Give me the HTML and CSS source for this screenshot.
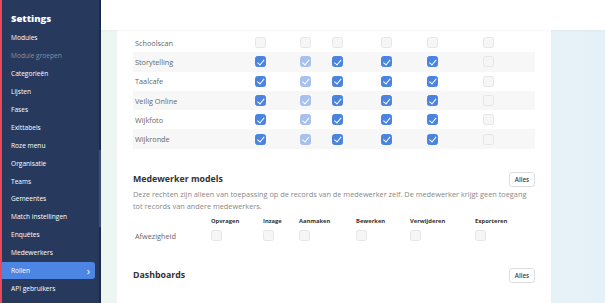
FILE: index.html
```html
<!DOCTYPE html>
<html lang="nl">

<head>
    <meta charset="UTF-8">
    <meta name="viewport" content="width=device-width, initial-scale=1.0">
    <title>Rollen</title>
    <link rel="stylesheet" href="styles.css">
</head>

<body>

    <!-- Sidebar -->
    <div class="sidebar">
        <h2>Settings</h2>
        <a href="#">Modules</a>
        <a href="#" class="muted">Module groepen</a>
        <a href="#">Categorieën</a>
        <a href="#">Lijsten</a>
        <a href="#">Fases</a>
        <a href="#">Exittabels</a>
        <a href="#">Roze menu</a>
        <a href="#">Organisatie</a>
        <a href="#">Teams</a>
        <a href="#">Gemeentes</a>
        <a href="#">Match instellingen</a>
        <a href="#">Enquêtes</a>
        <a href="#">Medewerkers</a>
        <a href="#" class="active">Rollen <span class="chevron">&#8250;</span></a>
        <a href="#">API gebruikers</a>
        <div class="scroll-thumb"></div>
    </div>

    <!-- Main Content -->
    <div class="main">
        <div class="topbar"></div>

        <div class="content">
            <div class="card">

                <!-- Module rights -->
                <div class="rights-table">
                    <div class="row">
                        <span class="label">Schoolscan</span>
                        <span class="box"></span>
                        <span class="box"></span>
                        <span class="box"></span>
                        <span class="box"></span>
                        <span class="box"></span>
                        <span class="box"></span>
                    </div>
                    <div class="row">
                        <span class="label">Storytelling</span>
                        <span class="box checked"></span>
                        <span class="box checked light"></span>
                        <span class="box checked"></span>
                        <span class="box checked"></span>
                        <span class="box checked"></span>
                        <span class="box"></span>
                    </div>
                    <div class="row">
                        <span class="label">Taalcafe</span>
                        <span class="box checked"></span>
                        <span class="box checked light"></span>
                        <span class="box checked"></span>
                        <span class="box checked"></span>
                        <span class="box checked"></span>
                        <span class="box"></span>
                    </div>
                    <div class="row">
                        <span class="label">Veilig Online</span>
                        <span class="box checked"></span>
                        <span class="box checked light"></span>
                        <span class="box checked"></span>
                        <span class="box checked"></span>
                        <span class="box checked"></span>
                        <span class="box"></span>
                    </div>
                    <div class="row">
                        <span class="label">Wijkfoto</span>
                        <span class="box checked"></span>
                        <span class="box checked light"></span>
                        <span class="box checked"></span>
                        <span class="box checked"></span>
                        <span class="box checked"></span>
                        <span class="box"></span>
                    </div>
                    <div class="row">
                        <span class="label">Wijkronde</span>
                        <span class="box checked"></span>
                        <span class="box checked light"></span>
                        <span class="box checked"></span>
                        <span class="box checked"></span>
                        <span class="box checked"></span>
                        <span class="box"></span>
                    </div>
                </div>

                <!-- Medewerker models -->
                <div class="section-head">
                    <h3>Medewerker models</h3>
                    <button class="all-btn">Alles</button>
                </div>
                <p class="section-info">Deze rechten zijn alleen van toepassing op de records van de medewerker zelf. De medewerker krijgt geen toegang tot records van andere medewerkers.</p>

                <div class="model-table">
                    <div class="model-row head">
                        <span></span>
                        <span>Opvragen</span>
                        <span>Inzage</span>
                        <span>Aanmaken</span>
                        <span>Bewerken</span>
                        <span>Verwijderen</span>
                        <span>Exporteren</span>
                    </div>
                    <div class="model-row">
                        <span class="label">Afwezigheid</span>
                        <span class="box"></span>
                        <span class="box"></span>
                        <span class="box"></span>
                        <span class="box"></span>
                        <span class="box"></span>
                        <span class="box"></span>
                    </div>
                </div>

                <!-- Dashboards -->
                <div class="section-head dashboards">
                    <h3>Dashboards</h3>
                    <button class="all-btn">Alles</button>
                </div>

            </div>
        </div>
    </div>

</body>

</html>
```

FILE: styles.css
```css
/* Global Styles */
body {
    margin: 0;
    font-family: 'Open Sans', sans-serif;
    color: #333;
    display: flex;
    height: 303px;
    overflow: hidden;
}

/* Sidebar Styles */
.sidebar {
    position: relative;
    width: 97px;
    flex-shrink: 0;
    background-color: #273a5e;
    border-left: 2px solid #ec4756;
    border-right: 2px solid #1b2b4b;
    padding: 11px 0 0 0;
}

.sidebar h2 {
    margin: 0 0 2px 9px;
    font-size: 9.5px;
    font-weight: 800;
    line-height: 16px;
    color: white;
}

.sidebar a {
    display: flex;
    align-items: center;
    justify-content: space-between;
    height: 17.9px;
    padding: 0 7px 0 9px;
    font-size: 6.6px;
    color: white;
    text-decoration: none;
}

.sidebar a.muted {
    color: #8390a8;
}

.sidebar a.active {
    background-color: #4c86e2;
    border-radius: 0 3px 3px 0;
    margin-right: 4px;
    padding-right: 5px;
}

.chevron {
    font-size: 11px;
    line-height: 1;
}

.scroll-thumb {
    position: absolute;
    right: -2px;
    top: 150px;
    width: 2px;
    height: 77px;
    background-color: #3a4f76;
}

/* Main Content */
.main {
    flex: 1;
    display: flex;
    flex-direction: column;
    background: linear-gradient(90deg, #eef6f3, #e5f1f8);
}

.topbar {
    height: 30px;
    background-color: white;
    box-shadow: 0 1px 2px rgba(0, 0, 0, 0.04);
    position: relative;
    z-index: 1;
}

.content {
    flex: 1;
    display: flex;
    padding: 0 54px 0 16px;
}

.card {
    flex: 1;
    background-color: white;
    padding: 3px 16px 0 16px;
}

/* Rights Table */
.row {
    display: grid;
    grid-template-columns: 122px 45px 32px 49px 46px 56px 1fr;
    align-items: center;
    height: 19.3px;
}

.row:nth-child(even) {
    background-color: #f7f7f7;
}

.label {
    padding-left: 2px;
    font-size: 7.3px;
    color: #666;
}

.box {
    display: block;
    width: 9px;
    height: 9px;
    border: 1px solid #e6e6e6;
    background-color: #f6f6f6;
    border-radius: 2.5px;
    position: relative;
}

.box.checked {
    background-color: #4a84e0;
    border-color: #4a84e0;
}

.box.checked.light {
    background-color: #a6c1ee;
    border-color: #a6c1ee;
}

.box.checked::after {
    content: "";
    position: absolute;
    left: 3px;
    top: 0.5px;
    width: 2.5px;
    height: 5.5px;
    border: solid white;
    border-width: 0 1.3px 1.3px 0;
    transform: rotate(40deg);
}

/* Sections */
.section-head {
    display: flex;
    justify-content: space-between;
    align-items: center;
    margin-top: 23px;
    height: 15px;
}

.section-head h3 {
    margin: 0;
    font-size: 8.8px;
    font-weight: 700;
    color: #333;
}

.all-btn {
    font-family: 'Open Sans', sans-serif;
    font-size: 6.3px;
    font-weight: 600;
    color: #444;
    background-color: white;
    border: 1px solid #ddd;
    border-radius: 3px;
    height: 15px;
    width: 26px;
    padding: 0;
    cursor: pointer;
}

.section-info {
    margin: 1px 0 0 0;
    font-size: 7.35px;
    line-height: 12px;
    color: #888;
}

/* Model Table */
.model-table {
    margin-top: 3px;
}

.model-row {
    display: grid;
    grid-template-columns: 78px 52px 36px 57px 54px 65px 1fr;
    align-items: center;
    height: 18px;
}

.model-row.head {
    height: 12px;
    font-size: 5.8px;
    font-weight: 700;
    color: #333;
}

.dashboards {
    margin-top: 23px;
}
```
